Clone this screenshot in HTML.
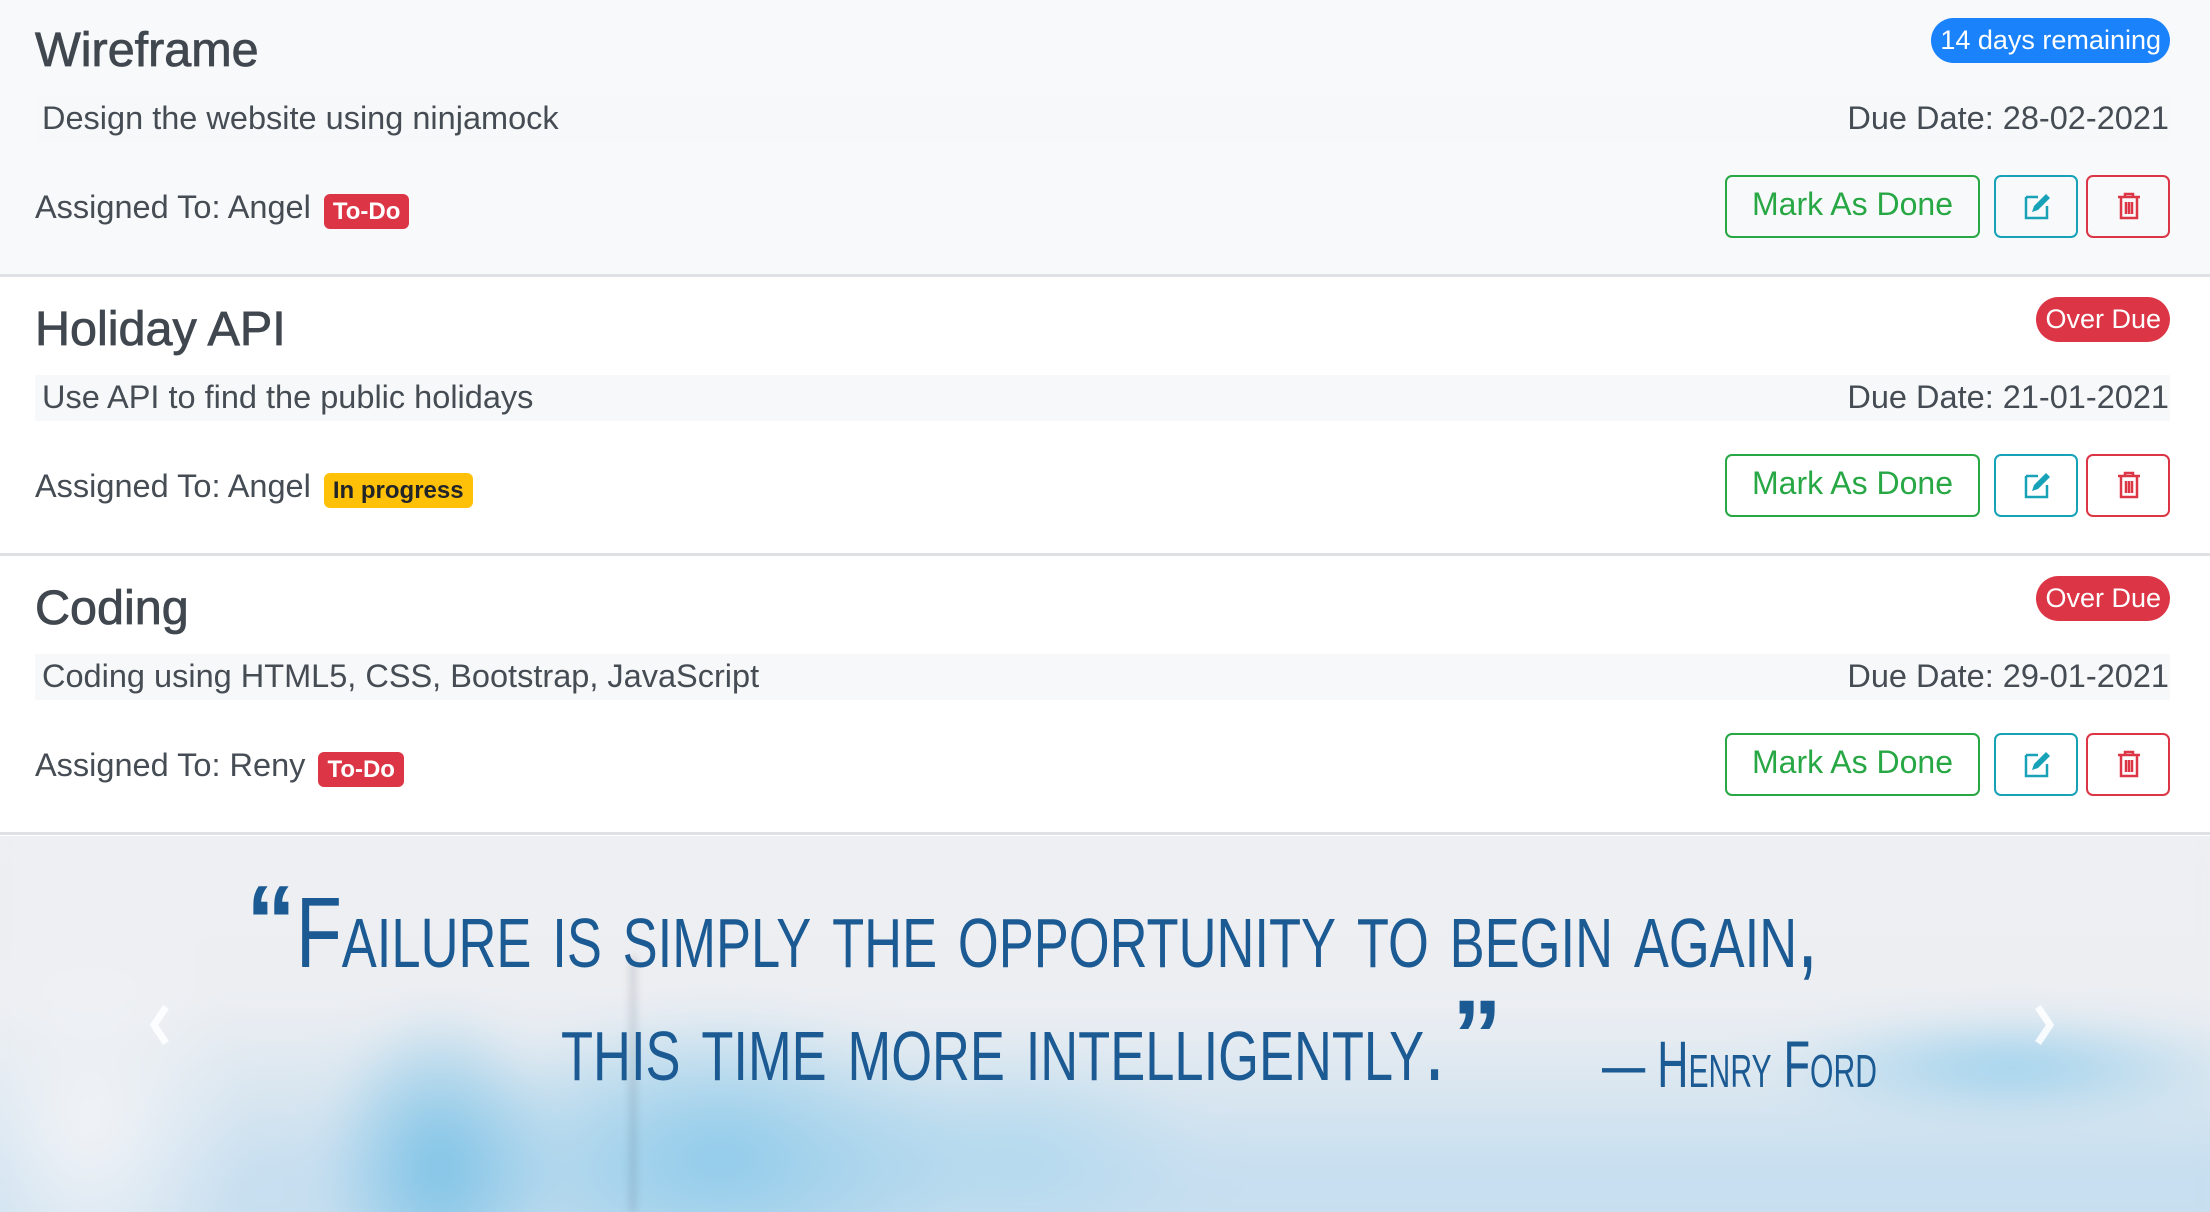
<!DOCTYPE html>
<html><head><meta charset="utf-8">
<style>
*{margin:0;padding:0;box-sizing:border-box}
body{width:2210px;height:1212px;overflow:hidden;background:#fff;font-family:"Liberation Sans",Arial,sans-serif;color:#454c54;position:relative}
.card{position:absolute;left:0;width:2210px;height:277px;border-bottom:3px solid #dfe1e4}
.title{position:absolute;left:35px;top:22px;font-size:48.5px;color:#40474f;-webkit-text-stroke:0.8px #40474f}
.band{position:absolute;left:35px;right:40px;top:96px;height:46px;background:#f7f8f9}
.desc{position:absolute;left:42px;top:98px;font-size:32.5px;line-height:40px}
.due{position:absolute;right:41px;top:98px;font-size:32.5px;line-height:40px}
.pill{position:absolute;right:40px;top:18px;height:45px;border-radius:23px;color:#fff;font-size:27px;line-height:45px;padding:0 9px}
.assn{position:absolute;left:35px;top:187px;font-size:32.5px;line-height:40px;white-space:nowrap}
.tag{display:inline-block;vertical-align:-1px;font-size:24px;font-weight:bold;line-height:35px;padding:0 9px;border-radius:6px;color:#fff;margin-left:4px}
.btn{position:absolute;top:175px;height:63px;border:2px solid;border-radius:7px;background:transparent}
.mad{left:1725px;width:255px;border-color:#28a745;color:#28a745;font-size:32px;text-align:center;line-height:54px}
.ed{left:1994px;width:84px;border-color:#17a2b8}
.dl{left:2086px;width:84px;border-color:#dc3545}
.btn svg{position:absolute;left:27px;top:14px}
</style></head><body>

<div class="card" style="top:0;background:#f8f9fa">
  <div class="title">Wireframe</div>
  <div class="pill" style="background:#1a82fb">14 days remaining</div>
  <div class="band"></div>
  <div class="desc">Design the website using ninjamock</div>
  <div class="due">Due Date: 28-02-2021</div>
  <div class="assn">Assigned To: Angel <span class="tag" style="background:#dc3545">To-Do</span></div>
  <div class="btn mad">Mark As Done</div>
  <div class="btn ed"><svg width="30" height="30" viewBox="0 0 30 30"><path d="M3 6h12M3 6v21h21V15" fill="none" stroke="#17a2b8" stroke-width="2.5"/><path d="M9 21l2-6L23 3l4 4-12 12z" fill="#17a2b8"/></svg></div>
  <div class="btn dl"><svg width="30" height="30" viewBox="0 0 30 30" style="left:26px"><path d="M4 6h22M11 6V3h8v3M7 7v20h16V7M12 11v12M15 11v12M18 11v12" fill="none" stroke="#dc3545" stroke-width="2.5"/></svg></div>
</div>

<div class="card" style="top:279px;background:#fff">
  <div class="title">Holiday API</div>
  <div class="pill" style="background:#dc3545">Over Due</div>
  <div class="band"></div>
  <div class="desc">Use API to find the public holidays</div>
  <div class="due">Due Date: 21-01-2021</div>
  <div class="assn">Assigned To: Angel <span class="tag" style="background:#ffc107;color:#212529">In progress</span></div>
  <div class="btn mad">Mark As Done</div>
  <div class="btn ed"><svg width="30" height="30" viewBox="0 0 30 30"><path d="M3 6h12M3 6v21h21V15" fill="none" stroke="#17a2b8" stroke-width="2.5"/><path d="M9 21l2-6L23 3l4 4-12 12z" fill="#17a2b8"/></svg></div>
  <div class="btn dl"><svg width="30" height="30" viewBox="0 0 30 30" style="left:26px"><path d="M4 6h22M11 6V3h8v3M7 7v20h16V7M12 11v12M15 11v12M18 11v12" fill="none" stroke="#dc3545" stroke-width="2.5"/></svg></div>
</div>

<div class="card" style="top:558px;background:#fff">
  <div class="title">Coding</div>
  <div class="pill" style="background:#dc3545">Over Due</div>
  <div class="band"></div>
  <div class="desc">Coding using HTML5, CSS, Bootstrap, JavaScript</div>
  <div class="due">Due Date: 29-01-2021</div>
  <div class="assn">Assigned To: Reny <span class="tag" style="background:#dc3545">To-Do</span></div>
  <div class="btn mad">Mark As Done</div>
  <div class="btn ed"><svg width="30" height="30" viewBox="0 0 30 30"><path d="M3 6h12M3 6v21h21V15" fill="none" stroke="#17a2b8" stroke-width="2.5"/><path d="M9 21l2-6L23 3l4 4-12 12z" fill="#17a2b8"/></svg></div>
  <div class="btn dl"><svg width="30" height="30" viewBox="0 0 30 30" style="left:26px"><path d="M4 6h22M11 6V3h8v3M7 7v20h16V7M12 11v12M15 11v12M18 11v12" fill="none" stroke="#dc3545" stroke-width="2.5"/></svg></div>
</div>

<div style="position:absolute;left:0;top:836px;width:2210px;height:376px;overflow:hidden;background:#ecedf1">
  <div style="position:absolute;left:-40px;top:-40px;width:2290px;height:460px;filter:blur(20px);
    background:
      radial-gradient(ellipse 120px 160px at 480px 370px,#7cc2e6 0%,rgba(124,194,230,0) 100%),
      radial-gradient(ellipse 260px 150px at 760px 360px,#8fcbea 0%,rgba(143,203,234,0) 100%),
      radial-gradient(ellipse 200px 110px at 1050px 360px,#b3d9ee 0%,rgba(179,217,238,0) 100%),
      radial-gradient(ellipse 240px 50px at 2050px 270px,#98cfec 0%,rgba(152,207,236,0) 100%),
      radial-gradient(ellipse 160px 220px at 130px 330px,#f2f3f6 0%,rgba(242,243,246,0) 100%),
      linear-gradient(180deg,#eeeff3 0%,#eceef2 45%,#dbe7f0 62%,#c6def0 82%,#c8dfee 100%);"></div>
  <div style="position:absolute;left:630px;top:120px;width:6px;height:256px;background:rgba(60,70,90,0.18);filter:blur(4px)"></div>
</div>

<svg style="position:absolute;left:0;top:0" width="2210" height="1212">
  <g fill="#1b5a92" font-family="'Liberation Sans Narrow','Liberation Sans',sans-serif">
    <text x="246" y="955" font-size="100" font-weight="bold">“</text>
    <text x="296" y="967" font-size="100" textLength="1522" lengthAdjust="spacingAndGlyphs" style="font-variant:small-caps">Failure is simply the opportunity to begin again,</text>
    <text x="561" y="1080" font-size="100" textLength="884" lengthAdjust="spacingAndGlyphs" style="font-variant:small-caps">this time more intelligently.</text>
    <text x="1452" y="1070" font-size="100" font-weight="bold">”</text>
    <text x="1602" y="1087" font-size="66" textLength="275" lengthAdjust="spacingAndGlyphs" style="font-variant:small-caps">— Henry Ford</text>
  </g>
  <path d="M166 1007l-12 18 12 18" fill="none" stroke="rgba(255,255,255,0.85)" stroke-width="7"/>
  <path d="M2038 1007l12 18-12 18" fill="none" stroke="rgba(255,255,255,0.85)" stroke-width="7"/>
</svg>
</body></html>
